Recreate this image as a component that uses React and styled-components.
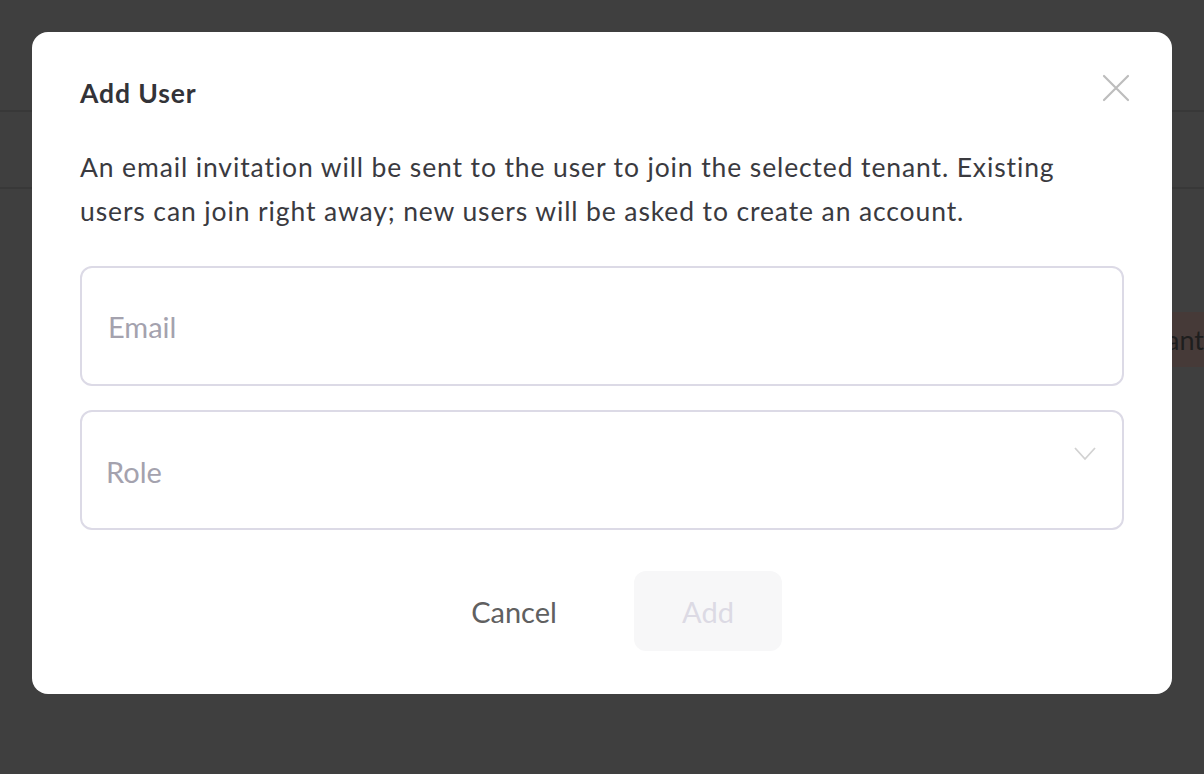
import React from 'react';
import styled, { createGlobalStyle } from 'styled-components';

const GlobalStyle = createGlobalStyle`
  html, body {
    margin: 0;
    padding: 0;
    width: 1204px;
    height: 774px;
    overflow: hidden;
    background: #3f3f3f;
    font-family: Lato, "Open Sans", "Liberation Sans", sans-serif;
  }
  * { box-sizing: border-box; }
`;

const Page = styled.div`
  width: 1204px;
  height: 774px;
  background: #3f3f3f;
  display: flex;
  flex-direction: column;
  overflow: hidden;
`;

const PageBand = styled.div`
  height: ${p => p.$h}px;
  flex-shrink: 0;
  border-bottom: ${p => (p.$line ? '2px solid #383838' : 'none')};
`;

const Toolbar = styled.div`
  display: flex;
  justify-content: flex-end;
  padding-top: 123px;
`;

const GhostButton = styled.div`
  height: 55px;
  display: flex;
  align-items: center;
  padding: 0 40px 0 24px;
  margin-right: -40px;
  background: #463a38;
  color: #1e1e1e;
  font-size: 27px;
  white-space: nowrap;
`;

const Overlay = styled.div`
  position: fixed;
  inset: 0;
  display: flex;
  align-items: flex-start;
  justify-content: center;
  padding-top: 32px;
`;

const Modal = styled.div`
  position: relative;
  width: 1140px;
  height: 662px;
  background: #ffffff;
  border-radius: 16px;
  padding: 45px 48px 42px;
  display: flex;
  flex-direction: column;
`;

const Title = styled.h2`
  margin: 0;
  font-size: 26.5px;
  line-height: 32px;
  letter-spacing: 0.9px;
  font-weight: 700;
  color: #333338;
`;

const CloseButton = styled.button`
  position: absolute;
  top: 32px;
  right: 32px;
  width: 48px;
  height: 48px;
  border: none;
  background: transparent;
  padding: 0;
  display: flex;
  align-items: center;
  justify-content: center;
  cursor: pointer;
`;

const Description = styled.p`
  margin: 36px 0 0;
  font-size: 26.5px;
  line-height: 44px;
  letter-spacing: 0.88px;
  color: #3a3a3f;
`;

const Fields = styled.div`
  margin-top: 33px;
  display: flex;
  flex-direction: column;
  gap: 24px;
`;

const Field = styled.div`
  height: 120px;
  border: 2px solid #dcdae6;
  border-radius: 12px;
  display: flex;
  align-items: center;
  justify-content: space-between;
  padding: ${p => (p.$select ? '0 26px 0 24px' : '0 26px')};
`;

const Placeholder = styled.span`
  font-size: 29px;
  color: #a4a2ae;
  margin-top: ${p => (p.$select ? '2px' : '0')};
`;

const Chevron = styled.svg`
  align-self: flex-start;
  margin-top: 35px;
`;

const Footer = styled.div`
  margin-top: 41px;
  display: flex;
  justify-content: center;
  align-items: center;
  gap: 46px;
  padding-left: 18px;
`;

const ActionButton = styled.button`
  width: 148px;
  height: 80px;
  border: none;
  border-radius: 12px;
  font-family: inherit;
  font-size: 29px;
  background: ${p => (p.$primary ? '#f7f7f8' : 'transparent')};
  color: ${p => (p.$primary ? '#dcdae4' : '#606060')};
  cursor: ${p => (p.$disabled ? 'default' : 'pointer')};
`;

export default function App() {
  return (
    <>
      <GlobalStyle />
      <Page>
        <PageBand $h={112} $line />
        <PageBand $h={77} $line />
        <Toolbar>
          <GhostButton>Add Tenant</GhostButton>
        </Toolbar>
      </Page>
      <Overlay>
        <Modal>
          <Title>Add User</Title>
          <CloseButton aria-label="Close">
            <svg width="28" height="28" viewBox="0 0 28 28">
              <path d="M2 2 L26 26 M26 2 L2 26" stroke="#bdbdbd" strokeWidth="2.2" strokeLinecap="round" />
            </svg>
          </CloseButton>
          <Description>
            An email invitation will be sent to the user to join the selected tenant. Existing
            users can join right away; new users will be asked to create an account.
          </Description>
          <Fields>
            <Field>
              <Placeholder>Email</Placeholder>
            </Field>
            <Field $select>
              <Placeholder $select>Role</Placeholder>
              <Chevron width="22" height="14" viewBox="0 0 22 14">
                <path d="M1 1 L11 12 L21 1" fill="none" stroke="#d2d2d2" strokeWidth="1.8" />
              </Chevron>
            </Field>
          </Fields>
          <Footer>
            <ActionButton>Cancel</ActionButton>
            <ActionButton $primary $disabled>Add</ActionButton>
          </Footer>
        </Modal>
      </Overlay>
    </>
  );
}
